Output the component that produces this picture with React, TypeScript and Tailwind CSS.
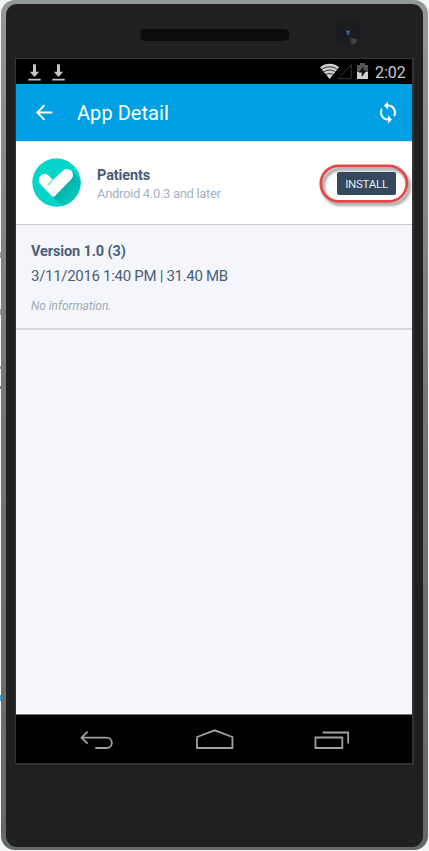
import React from 'react';

function DownloadIcon() {
  return (
    <svg width="13" height="18" viewBox="0 0 13 18" fill="#c4c4c4" className="shrink-0">
      <path d="M5 .3h3v7.4h3.2L6.5 13 1.800 7.700H5z" />
      <path d="M.3 14.800h12.400v1.700H.3z" />
    </svg>
  );
}

function StatusIcons() {
  return (
    <svg width="50" height="18" viewBox="0 0 50 18" className="shrink-0">
      <path d="M0 4.2C5.5-.4 13.7-.4 19.2 4.2L9.6 16z" fill="#d0d0d0" />
      <path d="M1.2 6.8C6.2 2.8 13 2.8 18 6.8M3.2 9.4c4-3.1 8.8-3.1 12.8 0M5.4 12c2.6-1.9 5.8-1.9 8.4 0" fill="none" stroke="#000" strokeWidth=".8" />
      <path d="M31.3 1.5v14.2H18.2z" fill="none" stroke="#383838" strokeWidth="1" />
      <path d="M40 0h5v2h3v14H37V2h3z" fill="#555" />
      <path d="M37 9h11v7H37z" fill="#d0d0d0" />
      <path d="M43.5 3.5v4.1h3l-4.8 6.3V9.5h-3z" fill="#111" />
    </svg>
  );
}

function Camera() {
  return (
    <svg width="28" height="28" viewBox="0 0 28 28">
      <defs>
        <radialGradient id="glint" cx="20" cy="22" r="7" gradientUnits="userSpaceOnUse">
          <stop offset="0" stopColor="#4a4a4c" />
          <stop offset="1" stopColor="#1c1d20" />
        </radialGradient>
      </defs>
      <circle cx="14" cy="14" r="13.7" fill="#1c1d20" />
      <path d="M15 18l9.5 2.5c-1.3 2.8-4 5-7 6z" fill="url(#glint)" />
      <circle cx="14" cy="14" r="3.4" fill="#12141c" />
      <path d="M12 11.5h4v2.2h-4z" fill="#59638a" />
      <path d="M12.8 14h2.6v2.2h-2.6z" fill="#176878" />
    </svg>
  );
}

function AppLogo() {
  return (
    <svg width="50" height="50" viewBox="0 0 50 50" className="shrink-0">
      <defs>
        <clipPath id="disc"><circle cx="24.5" cy="24.5" r="24.2" /></clipPath>
        <linearGradient id="shade" x1="28" y1="28" x2="42" y2="42" gradientUnits="userSpaceOnUse">
          <stop offset="0" stopColor="#02aea5" />
          <stop offset="1" stopColor="#03cbbf" />
        </linearGradient>
      </defs>
      <circle cx="24.5" cy="24.5" r="24.2" fill="#03d6c8" />
      <path clipPath="url(#disc)" d="M39.4 12.9L60 33.5 42 60 21.4 39z" fill="url(#shade)" />
      <path d="M8.1 25.9A6 6 0 0 1 16.6 17.5L20.9 21.9 30.8 12.8A6 6 0 0 1 39.3 21.3L23 38Q21.4 39.4 19.8 38z" fill="#fff" />
      <path d="M20.8 21.9l-5.2 5.3" stroke="#03c8bb" strokeWidth="1" />
    </svg>
  );
}

export default function App() {
  return (
    <div className="relative h-[851px] w-[429px] overflow-hidden bg-[#f4f4f4] pl-px font-['Roboto',sans-serif]">
      <div className="absolute left-0 top-[252px] h-[6px] w-px bg-[#999]" />
      <div className="absolute left-0 top-[309px] h-[6px] w-px bg-[#999]" />
      <div className="absolute left-0 top-[366px] h-[3px] w-px bg-[#999]" />
      <div className="absolute left-0 top-[386px] h-[3px] w-px bg-[#777]" />
      <div className="absolute left-0 top-[695px] h-[6px] w-px bg-[#39a8df]" />
      <div className="flex h-[850px] w-[427px] flex-col rounded-[14px] bg-linear-to-b from-[#929994] via-[#707874] to-[#626967] pb-[3px] pl-[5px] pr-[5px] pt-[4px]">
        <div className="flex flex-1 flex-col rounded-[11px] bg-[#202020] pl-[9px]">
          <div className="flex h-[54px] shrink-0 pl-[125px]">
            <div className="mt-[25px] h-[12px] w-[149px] rounded-[5px] bg-[#0d0d0d]" />
            <div className="ml-[45px] mt-[15px]"><Camera /></div>
          </div>
          <div className="flex h-[707px] w-[399px] flex-col border border-r-2 border-b-2 border-[#333]">
            <div className="flex h-[25px] shrink-0 items-center bg-black pl-[12px] pr-[6px]">
              <div className="flex gap-[11px] pt-[3px]"><DownloadIcon /><DownloadIcon /></div>
              <div className="ml-auto flex items-center">
                <div className="pt-px"><StatusIcons /></div>
                <span className="ml-[5px] w-[31px] whitespace-nowrap pt-[2px] text-[16px] leading-[22px] text-[#cbcbcb]">2:02</span>
              </div>
            </div>
            <header className="flex h-[57px] shrink-0 items-center bg-[#009fe3] pl-[20px] pr-[13px] text-white">
              <svg width="17" height="17" viewBox="0 0 17 17" fill="none" stroke="currentColor" strokeWidth="1.8">
                <path d="M16.4 8.5H1.5M8.5 1.2L1.3 8.5l7.2 7.3" />
              </svg>
              <h1 className="ml-[24px] whitespace-nowrap pt-px text-[20px] leading-[28px] tracking-[0.05px]">App Detail</h1>
              <svg width="22" height="22" viewBox="1 1.5 22 22" className="ml-auto" fill="currentColor" stroke="currentColor" strokeWidth=".1">
                <path d="M12 4V1L8 5l4 4V6c3.31 0 6 2.69 6 6 0 1.01-.25 1.97-.7 2.8l1.46 1.46C19.54 15.03 20 13.57 20 12c0-4.42-3.58-8-8-8zm0 14c-3.31 0-6-2.69-6-6 0-1.01.25-1.97.7-2.8L5.24 7.74C4.46 8.97 4 10.43 4 12c0 4.42 3.58 8 8 8v3l4-4-4-4v3z" />
              </svg>
            </header>
            <section className="flex h-[84px] shrink-0 items-center border-t border-b border-t-[#dce8ec] border-b-[#c9cbcd] bg-white pl-[16px]">
              <AppLogo />
              <div className="ml-[15px] whitespace-nowrap pt-[3px]">
                <h2 className="text-[14.5px] font-bold leading-[18px] tracking-[-0.12px] text-[#435b78]">Patients</h2>
                <p className="text-[13px] leading-[17px] tracking-[-0.32px] text-[#a6b2c2]">Android 4.0.3 and later</p>
              </div>
              <div className="relative ml-auto mr-[16px] mt-px">
                <button className="flex h-[23px] w-[59px] items-center justify-center rounded-[2px] bg-[#34495e] text-[11.5px] leading-[14px] tracking-[-0.25px] text-[#e4e9ee]">INSTALL</button>
                <svg width="100" height="54" viewBox="0 0 100 54" className="pointer-events-none absolute -left-[21px] -top-[13px]">
                  <defs><filter id="soft"><feGaussianBlur stdDeviation="1.5" /></filter></defs>
                  <rect x="7" y="10" width="86" height="35" rx="17.5" fill="none" stroke="#555" strokeOpacity=".65" strokeWidth="3" filter="url(#soft)" />
                  <rect x="4.8" y="6.8" width="86" height="35.5" rx="17.7" fill="none" stroke="#e44745" strokeWidth="2.7" />
                </svg>
              </div>
            </section>
            <main className="flex flex-1 flex-col bg-[#f4f6fb]">
              <section className="h-[105px] whitespace-nowrap border-b-2 border-[#d5d7d8] pl-[15px] pt-[17px] text-[#4a6079]">
                <h2 className="text-[14.5px] font-bold leading-[20px] tracking-[-0.12px]">Version 1.0 (3)</h2>
                <p className="mt-[4px] text-[15px] leading-[20px] tracking-[-0.3px]">3/11/2016 1:40 PM | 31.40 MB</p>
                <p className="mt-[12px] text-[12px] italic leading-[16px] tracking-[-0.05px] text-[#a0abb9]">No information.</p>
              </section>
            </main>
            <nav className="flex h-[49px] shrink-0 border-t border-[#777] bg-black pl-[63px]">
              <svg width="34" height="48" viewBox="0 0 34 48" fill="none" stroke="#a0a0a0" strokeWidth="1.8">
                <path d="M8.5 16.7L2.5 22.7l6 6M2.5 22.7H27.3c7.4 0 7.4 10.3 0 10.3H16.3" />
              </svg>
              <svg width="38" height="48" viewBox="0 0 38 48" className="ml-[83px]" fill="none" stroke="#a0a0a0" strokeWidth="1.8">
                <path d="M1 33V22l17.7-6.7L36.4 22v11z" />
              </svg>
              <svg width="36" height="48" viewBox="0 0 36 48" className="ml-[80px]" fill="none" stroke="#a0a0a0" strokeWidth="1.8">
                <path d="M1.5 22.5H28.3V33H1.5zM8.5 17.5h25.7v11" />
              </svg>
            </nav>
          </div>
        </div>
      </div>
    </div>
  );
}
